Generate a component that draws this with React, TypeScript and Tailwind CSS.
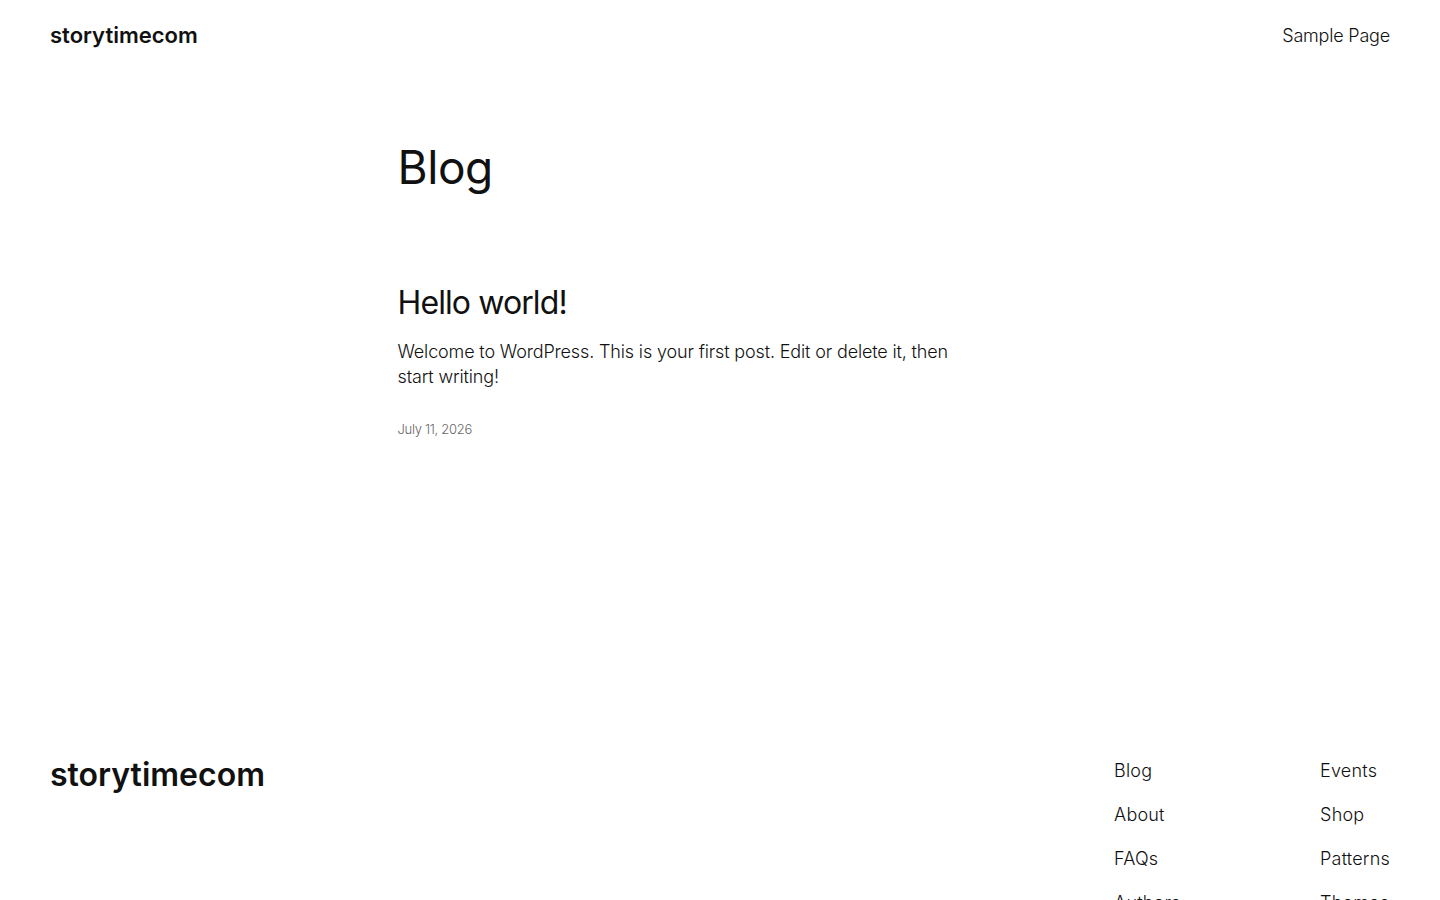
const font = { fontFamily: 'Inter, "Noto Sans", sans-serif' };

const footerLinksA = ['Blog', 'About', 'FAQs', 'Authors'];
const footerLinksB = ['Events', 'Shop', 'Patterns', 'Themes'];

export default function App() {
  return (
    <div style={font} className="min-h-screen bg-white text-[#111111] antialiased">
      {/* Header */}
      <header className="flex h-[70px] items-center justify-between px-[50px]">
        <a href="#" className="text-[22px] font-semibold tracking-[0px]">
          storytimecom
        </a>
        <nav>
          <a href="#" className="text-[18px] font-light tracking-[-0.2px]">
            Sample Page
          </a>
        </nav>
      </header>

      {/* Main */}
      <main className="mx-auto w-[645px] pt-[70px]">
        <h1 className="text-[46px] font-normal leading-[1.2] tracking-[-0.4px]">Blog</h1>

        <article className="mt-[89px]">
          <h2 className="text-[32px] font-normal leading-[1.2] tracking-[-0.9px]">
            <a href="#">Hello world!</a>
          </h2>
          <p className="mt-[16px] max-w-[570px] text-[18px] font-light leading-[25px] tracking-[-0.15px]">
            Welcome to WordPress. This is your first post. Edit or delete it, then start writing!
          </p>
          <p className="mt-[31px] text-[13px] font-light leading-[1.4] tracking-[-0.3px] text-[#686868]">
            July 11, 2026
          </p>
        </article>
      </main>

      {/* Footer */}
      <footer className="mt-[318px] flex justify-between px-[50px] pb-16">
        <a href="#" className="text-[32px] font-semibold leading-[1.2] tracking-[0px]">
          storytimecom
        </a>
        <div className="flex pt-[3px]">
          <ul className="flex w-[206px] flex-col gap-5">
            {footerLinksA.map((l) => (
              <li key={l} className="text-[18px] font-light leading-[24px] tracking-[0.2px]">
                <a href="#">{l}</a>
              </li>
            ))}
          </ul>
          <ul className="flex flex-col gap-5">
            {footerLinksB.map((l) => (
              <li key={l} className="text-[18px] font-light leading-[24px] tracking-[0.2px]">
                <a href="#">{l}</a>
              </li>
            ))}
          </ul>
        </div>
      </footer>
    </div>
  );
}
